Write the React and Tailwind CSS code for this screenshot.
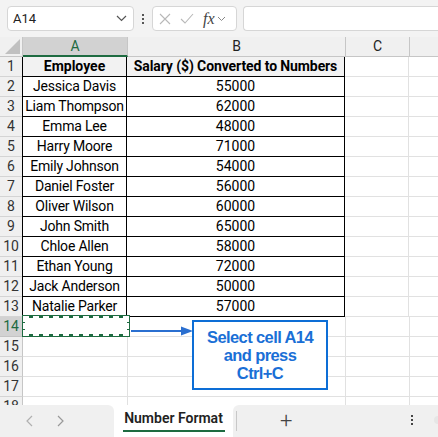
import React from "react";

const rows = [
  ["Jessica Davis", "55000"],
  ["Liam Thompson", "62000"],
  ["Emma Lee", "48000"],
  ["Harry Moore", "71000"],
  ["Emily Johnson", "54000"],
  ["Daniel Foster", "56000"],
  ["Oliver Wilson", "60000"],
  ["John Smith", "65000"],
  ["Chloe Allen", "58000"],
  ["Ethan Young", "72000"],
  ["Jack Anderson", "50000"],
  ["Natalie Parker", "57000"],
];

const font = { fontFamily: "Roboto, 'Liberation Sans', sans-serif" };

function RowHead({ n, active }) {
  return (
    <div
      className={`w-[23px] h-[20px] shrink-0 flex items-center justify-center text-[14px] border-r border-b ${
        active
          ? "bg-[#d2d2d2] text-[#1e6b41] border-r-[#1e6b41] border-b-[#c4c4c4]"
          : "bg-[#f0f0f0] text-[#333] border-r-[#c6c6c6] border-b-[#d4d4d4]"
      }`}
    >
      {n}
    </div>
  );
}

function EmptyCells() {
  return (
    <>
      <div className="w-[105px] h-[20px] shrink-0 border-r border-b border-[#e1e1e1]" />
      <div className="w-[218px] h-[20px] shrink-0 border-r border-b border-[#e1e1e1]" />
      <div className="w-[64px] h-[20px] shrink-0 border-r border-b border-[#e1e1e1]" />
      <div className="flex-1 h-[20px] border-b border-[#e1e1e1]" />
    </>
  );
}

export default function App() {
  return (
    <div className="relative w-[438px] h-[437px] overflow-hidden bg-white" style={font}>
      {/* Top bar */}
      <div className="h-[37px] bg-[#f3f3f3] flex items-center pl-[7px] gap-[6px]">
        <div className="w-[127px] h-[25px] bg-white border border-[#d6d6d6] rounded-[4px] flex items-center justify-between pl-[5px] pr-[6px] text-[13px] text-[#222]">
          <span>A14</span>
          <svg width="11" height="7" viewBox="0 0 11 7" fill="none" stroke="#555" strokeWidth="1.2">
            <path d="M1 1 L5.5 5.5 L10 1" />
          </svg>
        </div>
        <div className="flex flex-col gap-[2px] items-center w-[4px] mx-[1px]">
          <div className="w-[2px] h-[2px] bg-[#555]" />
          <div className="w-[2px] h-[2px] bg-[#555]" />
          <div className="w-[2px] h-[2px] bg-[#555]" />
        </div>
        <div className="w-[85px] h-[25px] bg-white border border-[#d6d6d6] rounded-[4px] flex items-center pl-[6px] gap-[9px]">
          <svg width="12" height="12" viewBox="0 0 12 12" stroke="#b8b8b8" strokeWidth="1.1" fill="none">
            <path d="M1 1 L11 11 M11 1 L1 11" />
          </svg>
          <svg width="14" height="11" viewBox="0 0 14 11" stroke="#b8b8b8" strokeWidth="1.1" fill="none">
            <path d="M1 6 L5 10 L13 1" />
          </svg>
          <div className="flex items-center gap-[2px]">
            <span className="text-[16px] italic text-[#444] leading-none" style={{ fontFamily: "'Liberation Serif', serif" }}>
              fx
            </span>
            <svg width="9" height="6" viewBox="0 0 9 6" fill="none" stroke="#888" strokeWidth="1">
              <path d="M1 1 L4.5 4.5 L8 1" />
            </svg>
          </div>
        </div>
        <div className="flex-1 h-[25px] bg-white border border-[#d6d6d6] rounded-l-[4px] border-r-0" />
      </div>

      {/* Column headers */}
      <div className="flex h-[20px] bg-[#f0f0f0]">
        <div className="w-[23px] h-[20px] shrink-0 relative border-r border-[#c6c6c6] border-b border-b-[#c6c6c6]">
          <svg className="absolute right-[2px] bottom-[2px]" width="15" height="15" viewBox="0 0 15 15">
            <path d="M15 0 L15 15 L0 15 Z" fill="#c0c0c0" />
          </svg>
        </div>
        <div className="w-[105px] shrink-0 bg-[#d2d2d2] border-b-2 border-[#1e6b41] border-r border-r-[#c6c6c6] flex items-center justify-center text-[14px] text-[#1e6b41]">
          A
        </div>
        <div className="w-[218px] shrink-0 border-r border-b border-[#c6c6c6] flex items-center justify-center text-[14px] text-[#222]">
          B
        </div>
        <div className="w-[64px] shrink-0 border-r border-b border-[#c6c6c6] flex items-center justify-center text-[14px] text-[#222]">
          C
        </div>
        <div className="flex-1 border-b border-[#c6c6c6]" />
      </div>

      {/* Row 1 */}
      <div className="flex">
        <RowHead n={1} />
        <div className="w-[105px] h-[20px] shrink-0 bg-[#f2f2f2] border-l border-r border-b border-black -ml-px flex items-center justify-center text-[14px] font-bold text-black">
          Employee
        </div>
        <div className="w-[218px] h-[20px] shrink-0 bg-[#f2f2f2] border-r border-b border-black flex items-center justify-center text-[14px] font-bold text-black whitespace-nowrap tracking-[-0.1px]">
          Salary ($) Converted to Numbers
        </div>
        <div className="w-[64px] h-[20px] shrink-0 border-r border-b border-[#e1e1e1]" />
        <div className="flex-1 h-[20px] border-b border-[#e1e1e1]" />
      </div>

      {rows.map(([name, sal], i) => (
        <div key={i} className="flex">
          <RowHead n={i + 2} />
          <div className="w-[105px] h-[20px] shrink-0 border-l border-r border-b border-black -ml-px flex items-center justify-center text-[14px] text-black whitespace-nowrap tracking-[-0.2px]">
            {name}
          </div>
          <div className="w-[218px] h-[20px] shrink-0 border-r border-b border-black flex items-center justify-center text-[14px] text-black">
            {sal}
          </div>
          <div className="w-[64px] h-[20px] shrink-0 border-r border-b border-[#e1e1e1]" />
          <div className="flex-1 h-[20px] border-b border-[#e1e1e1]" />
        </div>
      ))}

      {[14, 15, 16, 17, 18].map((n) => (
        <div key={n} className="flex">
          <RowHead n={n} active={n === 14} />
          <EmptyCells />
        </div>
      ))}

      {/* Selection marquee */}
      <div className="absolute left-[22px] top-[315px] w-[108px] h-[22px] border-[3px] border-[#1e6b41] pointer-events-none">
        <div className="absolute -inset-[2px] border-2 border-dashed border-white" />
      </div>

      {/* Arrow */}
      <svg className="absolute left-[131px] top-[325px]" width="64" height="12" viewBox="0 0 64 12">
        <line x1="0" y1="6" x2="52" y2="6" stroke="#2a6fd0" strokeWidth="2" />
        <path d="M50 1.5 L62 6 L50 10.5 Z" fill="#2a6fd0" />
      </svg>

      {/* Callout */}
      <div
        className="absolute left-[192px] top-[320px] w-[136px] h-[70px] border-[2.5px] border-[#0d6ed6] bg-white flex flex-col items-center justify-center text-[#1a6fd6] font-bold text-[16.5px] leading-[18px] tracking-[-0.6px]"
        style={{ fontFamily: "'Liberation Sans', Arial, sans-serif" }}
      >
        <span>Select cell A14</span>
        <span>and press</span>
        <span>Ctrl+C</span>
      </div>

      {/* Tab bar */}
      <div className="absolute left-0 right-0 top-[405px] h-[32px] flex">
        <div className="w-[114px] h-full bg-[#f0f0f0] rounded-tr-[6px] rounded-tl-[6px] flex items-center pl-[25px] gap-[20px]">
          <svg width="10" height="14" viewBox="0 0 10 14" fill="none" stroke="#b0b0b0" strokeWidth="1.2">
            <path d="M7 2 L2 7 L7 12" />
          </svg>
          <svg width="10" height="14" viewBox="0 0 10 14" fill="none" stroke="#999" strokeWidth="1.2">
            <path d="M3 2 L8 7 L3 12" />
          </svg>
        </div>
        <div className="w-[119px] h-full bg-white flex flex-col items-center pt-[3px]">
          <span className="text-[14px] font-semibold text-[#222] leading-[20px]">Number Format</span>
          <div className="w-[102px] h-[2px] bg-[#1e6b41] mt-[2px]" />
        </div>
        <div className="flex-1 h-full bg-[#f0f0f0] rounded-tl-[6px] flex items-center relative">
          <div className="w-px h-[20px] bg-[#c8c8c8] ml-[3px]" />
          <span className="ml-[43px] text-[22px] font-light text-[#444] leading-none">+</span>
          <div className="absolute left-[178px] top-[10px] flex flex-col gap-[2px]">
            <div className="w-[2px] h-[2px] bg-[#444]" />
            <div className="w-[2px] h-[2px] bg-[#444]" />
            <div className="w-[2px] h-[2px] bg-[#444]" />
          </div>
          <div className="absolute left-[201px] top-[11px] w-[8px] h-[8px] rounded-full bg-[#e6e6e6]" />
        </div>
      </div>
    </div>
  );
}
